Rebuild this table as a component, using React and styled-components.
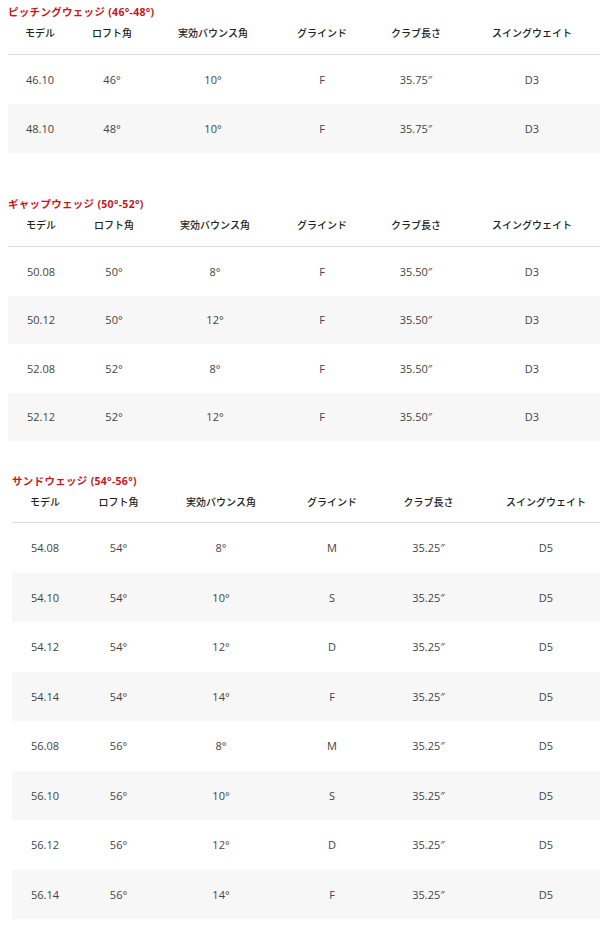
import React from "react";
import styled, { createGlobalStyle } from "styled-components";

const Global = createGlobalStyle`
  html, body { margin: 0; padding: 0; background: #fff; }
  body { overflow: hidden; font-family: "Open Sans", "Noto Sans CJK JP", sans-serif; }
`;

const Page = styled.div`
  width: 600px;
  height: 931px;
  overflow: hidden;
  display: flex;
  flex-direction: column;
`;

const Section = styled.section`
  padding-left: ${(p) => p.$left}px;
  margin-top: ${(p) => p.$top}px;
  overflow: hidden;
`;

const Title = styled.h3`
  margin: 0;
  height: 16px;
  line-height: 16px;
  font-family: "Open Sans", "Noto Sans CJK JP", sans-serif;
  font-size: 10.5px;
  letter-spacing: 0.3px;
  font-weight: 700;
  color: #c8161d;
  white-space: nowrap;
`;

const Grid = styled.div`
  display: grid;
  grid-template-columns: ${(p) => p.$cols.map((c) => c + "px").join(" ")};
  width: max-content;
`;

const HeadCell = styled.div`
  height: ${(p) => p.$h}px;
  box-sizing: border-box;
  padding-top: 6px;
  line-height: 14px;
  text-align: center;
  font-family: "Noto Sans CJK JP", sans-serif;
  font-size: 10px;
  font-weight: 500;
  color: #222;
  white-space: nowrap;
  border-bottom: 1px solid #dcdcdc;
`;

const Cell = styled.div`
  height: ${(p) => p.$h}px;
  display: flex;
  align-items: center;
  justify-content: center;
  font-family: "Open Sans", "Noto Sans CJK JP", sans-serif;
  font-size: 11px;
  color: #444;
  background: ${(p) => (p.$alt ? "#f7f7f7" : "#fff")};
  white-space: nowrap;
`;

const headers = ["モデル", "ロフト角", "実効バウンス角", "グラインド", "クラブ長さ", "スイングウェイト"];

const sections = [
  {
    title: "ピッチングウェッジ (46°-48°)",
    left: 8,
    top: 4,
    head: 35,
    row: 49,
    cols: [64, 80, 122, 96, 92, 140],
    rows: [
      ["46.10", "46°", "10°", "F", "35.75″", "D3"],
      ["48.10", "48°", "10°", "F", "35.75″", "D3"],
    ],
  },
  {
    title: "ギャップウェッジ (50°-52°)",
    left: 8,
    top: 43,
    head: 35,
    row: 48.5,
    cols: [66, 80, 122, 92, 96, 136],
    rows: [
      ["50.08", "50°", "8°", "F", "35.50″", "D3"],
      ["50.12", "50°", "12°", "F", "35.50″", "D3"],
      ["52.08", "52°", "8°", "F", "35.50″", "D3"],
      ["52.12", "52°", "12°", "F", "35.50″", "D3"],
    ],
  },
  {
    title: "サンドウェッジ (54°-56°)",
    left: 12,
    top: 32,
    head: 34,
    row: 49.5,
    cols: [66, 81, 124, 98, 95, 140],
    rows: [
      ["54.08", "54°", "8°", "M", "35.25″", "D5"],
      ["54.10", "54°", "10°", "S", "35.25″", "D5"],
      ["54.12", "54°", "12°", "D", "35.25″", "D5"],
      ["54.14", "54°", "14°", "F", "35.25″", "D5"],
      ["56.08", "56°", "8°", "M", "35.25″", "D5"],
      ["56.10", "56°", "10°", "S", "35.25″", "D5"],
      ["56.12", "56°", "12°", "D", "35.25″", "D5"],
      ["56.14", "56°", "14°", "F", "35.25″", "D5"],
    ],
  },
];

export default function App() {
  return (
    <Page>
      <Global />
      {sections.map((s) => (
        <Section key={s.title} $left={s.left} $top={s.top}>
          <Title>{s.title}</Title>
          <Grid $cols={s.cols}>
            {headers.map((h) => (
              <HeadCell key={h} $h={s.head}>{h}</HeadCell>
            ))}
            {s.rows.map((r, i) =>
              r.map((v, j) => (
                <Cell key={i + "-" + j} $h={s.row} $alt={i % 2 === 1}>
                  {v}
                </Cell>
              ))
            )}
          </Grid>
        </Section>
      ))}
    </Page>
  );
}
